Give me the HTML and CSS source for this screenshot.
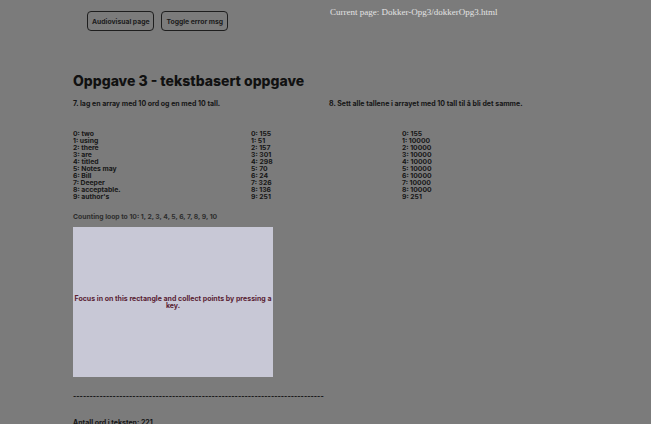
FILE: index.html
```html
<!DOCTYPE html>
<html lang="no">
<head>
<meta charset="utf-8">
<title>Oppgave 3</title>
<link rel="stylesheet" href="styles.css">
</head>
<body>
<header class="topbar">
  <div class="buttons">
    <button class="btn">Audiovisual page</button>
    <button class="btn">Toggle error msg</button>
  </div>
  <div class="current">Current page: Dokker-Opg3/dokkerOpg3.html</div>
</header>
<main class="main">
  <h1 class="title">Oppgave 3 - tekstbasert oppgave</h1>
  <div class="tasks">
    <p class="task task-a">7. lag en array med 10 ord og en med 10 tall.</p>
    <p class="task">8. Sett alle tallene i arrayet med 10 tall til å bli det samme.</p>
  </div>
  <div class="lists">
    <ul class="list list-words">
      <li>0: two</li><li>1: using</li><li>2: there</li><li>3: are</li><li>4: titled</li>
      <li>5: Notes may</li><li>6: Bill</li><li>7: Deeper</li><li>8: acceptable.</li><li>9: author's</li>
    </ul>
    <ul class="list list-nums">
      <li>0: 155</li><li>1: 51</li><li>2: 157</li><li>3: 301</li><li>4: 298</li>
      <li>5: 70</li><li>6: 24</li><li>7: 326</li><li>8: 136</li><li>9: 251</li>
    </ul>
    <ul class="list list-same">
      <li>0: 155</li><li>1: 10000</li><li>2: 10000</li><li>3: 10000</li><li>4: 10000</li>
      <li>5: 10000</li><li>6: 10000</li><li>7: 10000</li><li>8: 10000</li><li>9: 251</li>
    </ul>
  </div>
  <p class="counting">Counting loop to 10: 1, 2, 3, 4, 5, 6, 7, 8, 9, 10</p>
  <div class="game" tabindex="0">
    <p class="game-text">Focus in on this rectangle and collect points by pressing a key.</p>
  </div>
  <p class="dashes">----------------------------------------------------------------------------</p>
  <p class="count">Antall ord i teksten: 221</p>
</main>
</body>
</html>
```
FILE: styles.css
```css
* { box-sizing: border-box; }
html, body { margin: 0; padding: 0; }
body {
  background: #7b7b7b;
  font-family: Inter, "Noto Sans", sans-serif;
  color: #161616;
  width: 651px;
  height: 424px;
  overflow: hidden;
}
.topbar {
  display: flex;
  align-items: flex-start;
  padding-top: 11px;
  height: 31px;
}
.buttons {
  display: flex;
  gap: 7px;
  padding-left: 87px;
  width: 330px;
}
.btn {
  font-family: Inter, sans-serif;
  font-weight: 700;
  font-size: 6.8px;
  color: #1c1c1c;
  background: transparent;
  border: 1.5px solid #1e1e1e;
  border-radius: 4px;
  height: 20px;
  padding: 0 4px;
}
.current {
  font-family: "Liberation Serif", serif;
  font-size: 9px;
  color: #e3e3e3;
  margin-top: -4px;
}
.main {
  padding-left: 73px;
  padding-top: 41px;
}
.title {
  margin: 0;
  font-size: 14px;
  font-weight: 800;
  line-height: 18px;
  color: #111;
}
.tasks {
  display: flex;
  margin-top: 10px;
}
.task {
  margin: 0;
  font-size: 7px;
  font-weight: 700;
  line-height: 8px;
}
.task-a { width: 256px; }
.lists {
  display: flex;
  margin-top: 22px;
}
.list {
  list-style: none;
  margin: 0;
  padding: 0;
  font-size: 6.8px;
  font-weight: 700;
  line-height: 7px;
}
.list-words { width: 178px; }
.list-nums { width: 151px; }
.counting {
  margin: 13px 0 0;
  font-size: 6.8px;
  font-weight: 700;
  line-height: 8px;
  color: #2e2e2e;
}
.game {
  margin-top: 6px;
  width: 200px;
  height: 150px;
  background: #c8c8d6;
  display: flex;
  align-items: center;
  justify-content: center;
  text-align: center;
}
.game-text {
  margin: 0;
  font-size: 7px;
  font-weight: 700;
  line-height: 7px;
  color: #5a2233;
}
.dashes {
  margin: 16px 0 0;
  font-size: 7px;
  font-weight: 800;
  line-height: 8px;
  letter-spacing: 0;
}
.count {
  margin: 18px 0 0;
  font-size: 7px;
  font-weight: 700;
  line-height: 8px;
}
```
